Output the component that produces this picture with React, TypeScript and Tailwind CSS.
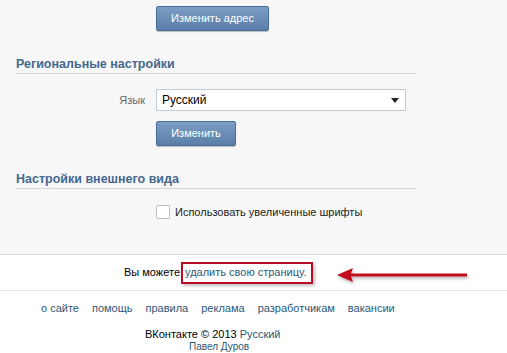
import React from "react";

const font = { fontFamily: "Tahoma, 'Liberation Sans', Arial, sans-serif" };

function BlueButton({ children, w }: { children: React.ReactNode; w: string }) {
  return (
    <button
      className={`${w} h-[25px] rounded-[2px] border border-[#4a6f98] bg-gradient-to-b from-[#7c9dc4] to-[#5a7fa9] text-[11px] text-white shadow-[0_1px_1px_rgba(0,0,0,0.25)]`}
    >
      {children}
    </button>
  );
}

export default function App() {
  const links = ["о сайте", "помощь", "правила", "реклама", "разработчикам", "вакансии"];
  return (
    <div className="w-[507px] h-[353px] overflow-hidden bg-white text-[11px] text-[#000]" style={font}>
      <div className="bg-[#f7f7f7] h-[255px] border-b border-[#dcdcdc] pt-[6px]">
        <div className="pl-[156px]">
          <BlueButton w="w-[113px]">Изменить адрес</BlueButton>
        </div>

        <div className="mx-[16px] w-[400px] mt-[25px] border-b border-[#d3d9de] pb-[1px]">
          <div className="text-[12.5px] font-bold text-[#45688e] leading-[16px]">Региональные настройки</div>
        </div>

        <div className="flex items-center mt-[15px]">
          <div className="w-[145px] text-right text-[#666]">Язык</div>
          <div className="ml-[11px] w-[250px] h-[22px] border border-[#c0cad5] bg-white flex items-center justify-between pl-[5px] pr-[6px]">
            <span className="text-[12px]">Русский</span>
            <svg width="8" height="5" viewBox="0 0 8 5">
              <path d="M0 0 L8 0 L4 5 Z" fill="#222" />
            </svg>
          </div>
        </div>

        <div className="pl-[156px] mt-[10px]">
          <BlueButton w="w-[80px]">Изменить</BlueButton>
        </div>

        <div className="mx-[16px] w-[400px] mt-[25px] border-b border-[#d3d9de] pb-[1px]">
          <div className="text-[12.5px] font-bold text-[#45688e] leading-[16px]">Настройки внешнего вида</div>
        </div>

        <div className="flex items-center pl-[156px] mt-[15px]">
          <div className="w-[14px] h-[14px] border border-[#c0c0c0] bg-white rounded-[1px]" />
          <span className="ml-[5px] text-[11px] text-[#222]">Использовать увеличенные шрифты</span>
        </div>
      </div>

      <div className="relative h-[36px] border-b border-[#e4e4e4] flex items-center">
        <div className="pl-[124px] text-[11px] flex items-center">
          <span>Вы можете</span>
          <span className="ml-[1px] pl-[2px] pr-[5px] border-2 border-[#b40d25] text-[#2b587a] h-[22px] flex items-center shadow-[2px_2px_3px_rgba(0,0,0,0.25)]">
            удалить свою страницу.
          </span>
        </div>
        <svg className="absolute left-[334px] top-[12px]" width="140" height="20" viewBox="0 0 140 20">
          <defs>
            <filter id="sh" x="-10%" y="-50%" width="130%" height="200%">
              <feDropShadow dx="1" dy="2" stdDeviation="1.5" floodColor="#000" floodOpacity="0.3" />
            </filter>
          </defs>
          <g filter="url(#sh)">
            <path d="M3 8 L19 1 L17 6.5 L133 6.5 L133 9.5 L17 9.5 L19 15 Z" fill="#c2101f" />
          </g>
        </svg>
      </div>

      <div className="flex pl-[41px] gap-[13px] mt-[10px] text-[11px] text-[#2b587a] leading-[14px]">
        {links.map((l) => (
          <span key={l}>{l}</span>
        ))}
      </div>
      <div className="pl-[145px] mt-[12px] text-[11px] leading-[14px]">
        ВКонтакте © 2013 <span className="text-[#2b587a]">Русский</span>
      </div>
      <div className="pl-[189px] text-[10px] text-[#2b587a] leading-[12px]">Павел Дуров</div>
    </div>
  );
}
